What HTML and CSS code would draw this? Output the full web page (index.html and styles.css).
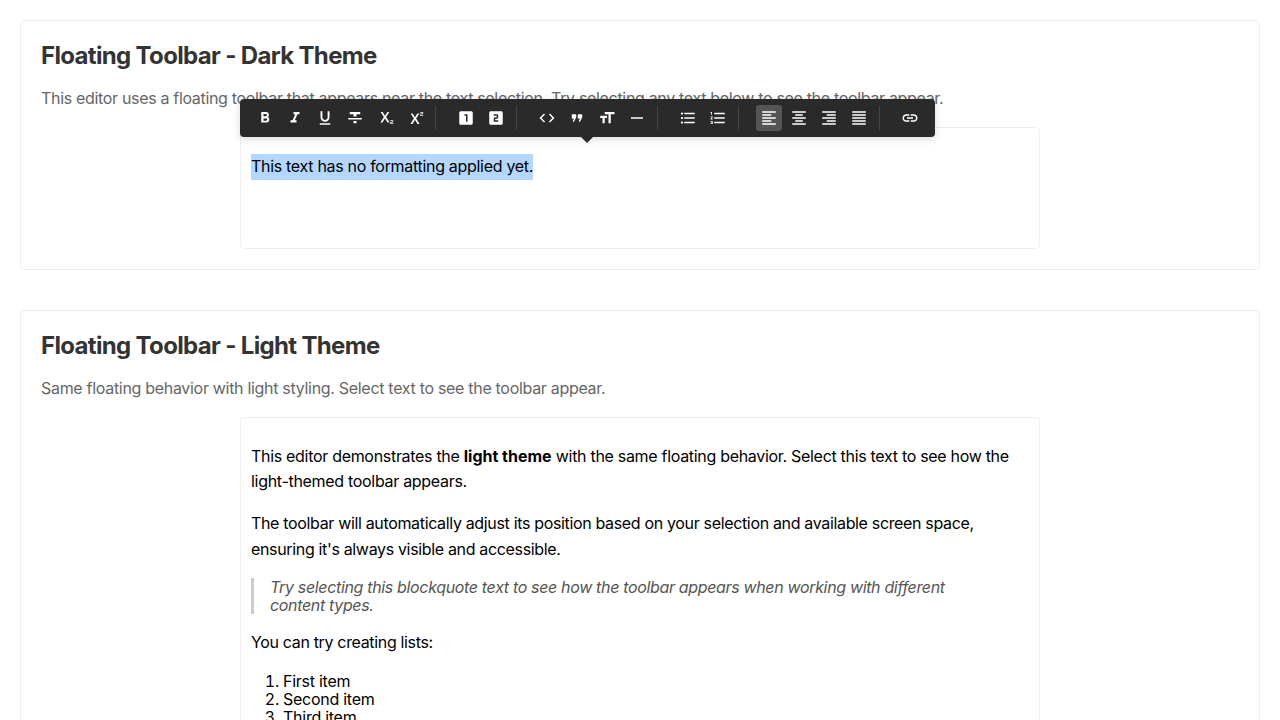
FILE: index.html
```html
<!DOCTYPE html>
<html lang="en">
<head>
<meta charset="utf-8">
<title>Floating Toolbar</title>
<link rel="stylesheet" href="styles.css">
</head>
<body>
<section class="demo">
  <h2 class="demo-title">Floating Toolbar - Dark Theme</h2>
  <p class="demo-text demo-text-long">This editor uses a floating toolbar that appears near the text selection. Try selecting any text below to see the toolbar appear.</p>
  <div class="editor">
    <p class="para"><span class="selected">This text has no formatting applied yet.</span></p>
    <div class="toolbar">
      <div class="group">
        <button class="tool"><svg viewBox="0 0 24 24"><path d="M15.6 10.79c.97-.67 1.65-1.77 1.65-2.79 0-2.26-1.75-4-4-4H7v14h7.04c2.09 0 3.71-1.7 3.71-3.79 0-1.52-.86-2.82-2.15-3.42zM10 6.5h3c.83 0 1.5.67 1.5 1.5s-.67 1.5-1.5 1.5h-3v-3zm3.5 9H10v-3h3.5c.83 0 1.5.67 1.5 1.5s-.67 1.5-1.5 1.5z"/></svg></button>
        <button class="tool"><svg viewBox="0 0 24 24"><path d="M10 4v3h2.21l-3.42 8H6v3h8v-3h-2.21l3.42-8H18V4z"/></svg></button>
        <button class="tool"><svg viewBox="0 0 24 24"><path d="M12 17c3.31 0 6-2.69 6-6V3h-2.5v8c0 1.93-1.57 3.5-3.5 3.5S8.5 12.93 8.5 11V3H6v8c0 3.31 2.69 6 6 6zm-7 2v2h14v-2H5z"/></svg></button>
        <button class="tool"><svg viewBox="0 0 24 24"><path d="M10 19h4v-3h-4v3zM5 4v3h5v3h4V7h5V4H5zM3 14h18v-2H3v2z"/></svg></button>
        <button class="tool"><svg viewBox="0 0 24 24"><path d="M22 18h-2v1h3v1h-4v-2c0-.55.45-1 1-1h2v-1h-3v-1h3c.55 0 1 .45 1 1v1c0 .55-.45 1-1 1zM5.88 18h2.66l3.4-5.42h.12l3.4 5.42h2.66l-4.65-7.27L17.81 4h-2.68l-3.07 4.99h-.12L8.85 4H6.19l4.32 6.73z"/></svg></button>
        <button class="tool"><svg viewBox="0 0 24 24"><path d="M22 7h-2v1h3v1h-4V7c0-.55.45-1 1-1h2V5h-3V4h3c.55 0 1 .45 1 1v1c0 .55-.45 1-1 1zM5.88 20h2.66l3.4-5.42h.12l3.4 5.42h2.66l-4.65-7.27L17.81 6h-2.68l-3.07 4.99h-.12L8.85 6H6.19l4.32 6.73z"/></svg></button>
      </div>
      <div class="group">
        <button class="tool"><svg viewBox="0 0 24 24"><path d="M19 3H5c-1.1 0-2 .9-2 2v14c0 1.1.9 2 2 2h14c1.1 0 2-.9 2-2V5c0-1.1-.9-2-2-2zm-5 14h-2V9h-2V7h4v10z"/></svg></button>
        <button class="tool"><svg viewBox="0 0 24 24"><path d="M19 3H5c-1.1 0-2 .9-2 2v14c0 1.1.9 2 2 2h14c1.1 0 2-.9 2-2V5c0-1.1-.9-2-2-2zm-4 8c0 1.11-.9 2-2 2h-2v2h4v2H9v-4c0-1.11.9-2 2-2h2V9H9V7h4c1.1 0 2 .89 2 2v2z"/></svg></button>
      </div>
      <div class="group">
        <button class="tool"><svg viewBox="0 0 24 24"><path d="M9.4 16.6 4.8 12l4.6-4.6L8 6l-6 6 6 6 1.4-1.4zm5.2 0 4.6-4.6-4.6-4.6L16 6l6 6-6 6-1.4-1.4z"/></svg></button>
        <button class="tool"><svg viewBox="0 0 24 24"><path d="M7.2 17c.5 0 1-.3 1.200-.7l2.100-4.200c.3-.6.5-1.200.5-1.800V8c0-.55-.45-1-1-1H6c-.55 0-1 .45-1 1v4c0 .55.45 1 1 1h2l-1.600 2.900c-.3.500.1 1.100.8 1.100zm8 0c.5 0 1-.3 1.200-.7l2.100-4.200c.3-.6.5-1.200.5-1.800V8c0-.55-.45-1-1-1h-4c-.55 0-1 .45-1 1v4c0 .55.45 1 1 1h2l-1.600 2.900c-.3.500.1 1.100.8 1.100z"/></svg></button>
        <button class="tool"><svg viewBox="0 0 24 24"><path d="M9 4v3h5v12h3V7h5V4H9zm-6 8h3v7h3v-7h3V9H3v3z"/></svg></button>
        <button class="tool"><svg viewBox="0 0 24 24"><path d="M4 11h16v2H4z"/></svg></button>
      </div>
      <div class="group">
        <button class="tool"><svg viewBox="0 0 24 24"><path d="M4 10.5c-.83 0-1.5.67-1.5 1.5s.67 1.5 1.5 1.5 1.5-.67 1.5-1.5-.67-1.5-1.5-1.5zm0-6c-.83 0-1.5.67-1.5 1.5S3.17 7.5 4 7.5 5.5 6.83 5.5 6 4.83 4.5 4 4.5zm0 12c-.83 0-1.5.68-1.5 1.5s.68 1.5 1.5 1.5 1.5-.68 1.5-1.5-.67-1.5-1.5-1.5zM7 19h14v-2H7v2zm0-6h14v-2H7v2zm0-8v2h14V5H7z"/></svg></button>
        <button class="tool"><svg viewBox="0 0 24 24"><path d="M2 17h2v.5H3v1h1v.5H2v1h3v-4H2v1zm1-9h1V4H2v1h1v3zm-1 3h1.8L2 13.1v.9h3v-1H3.2L5 10.9V10H2v1zm5-6v2h14V5H7zm0 14h14v-2H7v2zm0-6h14v-2H7v2z"/></svg></button>
      </div>
      <div class="group">
        <button class="tool active"><svg viewBox="0 0 24 24"><path d="M15 15H3v2h12v-2zm0-8H3v2h12V7zM3 13h18v-2H3v2zm0 8h18v-2H3v2zM3 3v2h18V3H3z"/></svg></button>
        <button class="tool"><svg viewBox="0 0 24 24"><path d="M7 15v2h10v-2H7zm-4 6h18v-2H3v2zm0-8h18v-2H3v2zm4-6v2h10V7H7zM3 3v2h18V3H3z"/></svg></button>
        <button class="tool"><svg viewBox="0 0 24 24"><path d="M3 21h18v-2H3v2zm6-4h12v-2H9v2zm-6-4h18v-2H3v2zm6-4h12V7H9v2zM3 3v2h18V3H3z"/></svg></button>
        <button class="tool"><svg viewBox="0 0 24 24"><path d="M3 21h18v-2H3v2zm0-4h18v-2H3v2zm0-4h18v-2H3v2zm0-4h18V7H3v2zm0-6v2h18V3H3z"/></svg></button>
      </div>
      <div class="group">
        <button class="tool"><svg viewBox="0 0 24 24"><path d="M3.9 12c0-1.71 1.39-3.1 3.1-3.1h4V7H7c-2.76 0-5 2.24-5 5s2.24 5 5 5h4v-1.9H7c-1.71 0-3.1-1.39-3.1-3.1zM8 13h8v-2H8v2zm9-6h-4v1.9h4c1.71 0 3.1 1.39 3.1 3.1s-1.39 3.1-3.1 3.1h-4V17h4c2.76 0 5-2.24 5-5s-2.24-5-5-5z"/></svg></button>
      </div>
    </div>
  </div>
</section>
<section class="demo demo-last">
  <h2 class="demo-title">Floating Toolbar - Light Theme</h2>
  <p class="demo-text">Same floating behavior with light styling. Select text to see the toolbar appear.</p>
  <div class="editor">
    <p class="para para-intro">This editor demonstrates the <strong>light theme</strong> with the same floating behavior. Select this text to see how the<br>light-themed toolbar appears.</p>
    <p class="para para-detail">The toolbar will automatically adjust its position based on your selection and available screen space,<br>ensuring it's always visible and accessible.</p>
    <blockquote class="quote">Try selecting this blockquote text to see how the toolbar appears when working with different<br>content types.</blockquote>
    <p class="para para-detail">You can try creating lists:</p>
    <ol class="list">
      <li>First item</li>
      <li>Second item</li>
      <li>Third item</li>
    </ol>
  </div>
</section>
</body>
</html>
```
FILE: styles.css
```css
* { box-sizing: border-box; }
body {
  margin: 0;
  padding: 20px 20px 0;
  height: 720px;
  overflow: hidden;
  background: #fff;
  color: #000;
  font: 16px/18px Inter, "Liberation Sans", sans-serif;
  letter-spacing: -0.305px;
}
.demo {
  margin-bottom: 40px;
  padding: 20px;
  border: 1px solid #eee;
  border-radius: 4px;
}
.demo-last { margin-bottom: 0; }
.demo-title {
  margin: 0 0 19px;
  padding-top: 1px;
  font-size: 24px;
  line-height: 28px;
  font-weight: 700;
  letter-spacing: -0.66px;
  color: #333;
  white-space: nowrap;
}
.demo-text {
  margin: 0 0 20px;
  color: #666;
  white-space: nowrap;
}
.demo-text-long { letter-spacing: -0.325px; }
.editor {
  position: relative;
  width: 800px;
  min-height: 122px;
  margin: 0 auto;
  padding: 10px;
  border: 1px solid #eee;
  border-radius: 4px;
  white-space: nowrap;
}
.para { margin: 16px 0; line-height: 25.6px; }
.para-intro { padding: 0.2px 0 1px; line-height: 25px; }
.para-intro strong { letter-spacing: 0; }
.para-detail { letter-spacing: -0.34px; }
.selected { display: inline-block; height: 26px; background: #b3d7ff; }
.quote {
  margin: 16px 0;
  padding-left: 16px;
  border-left: 3px solid #ccc;
  color: #555;
  font-style: italic;
  letter-spacing: -0.34px;
}
.list { margin: 16px 0; padding-left: 32px; letter-spacing: -0.26px; }
.toolbar {
  position: absolute;
  left: -0.6px;
  top: -29px;
  display: flex;
  height: 38px;
  padding: 6px 12px;
  border-radius: 4px;
  background: #2a2a2a;
  box-shadow: 0 2px 8px rgba(0, 0, 0, .15);
}
.toolbar::after {
  content: "";
  position: absolute;
  left: 341px;
  top: 38px;
  border: 6px solid transparent;
  border-top-color: #2a2a2a;
  border-bottom: 0;
}
.group { display: flex; gap: 4px; }
.group + .group { margin-left: 7px; padding-left: 18px; position: relative; }
.group + .group::before {
  content: "";
  position: absolute;
  left: -0.5px;
  top: 1px;
  width: 1px;
  height: 24px;
  background: #444;
}
.tool {
  display: flex;
  width: 26px;
  height: 26px;
  padding: 4px;
  border: 0;
  border-radius: 3px;
  background: none;
}
.tool.active { background: #555; }
.tool svg { width: 18px; height: 18px; fill: #fff; }
```
